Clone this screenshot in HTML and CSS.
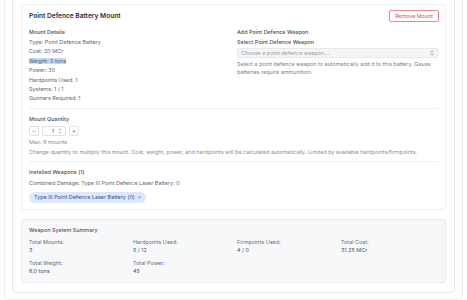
FILE: index.html
```html
<!DOCTYPE html>
<html>
<head>
    <title>Point Defence Battery Mount</title>
    <link rel="stylesheet" href="styles.css">
</head>
<body>

<div class="page">
    <div class="panel">

        <section class="card mount">
            <div class="mount-head">
                <h2>Point Defence Battery Mount</h2>
                <button class="btn-remove">Remove Mount</button>
            </div>

            <div class="mount-grid">
                <div class="details">
                    <h3>Mount Details</h3>
                    <ul class="stat-list">
                        <li>Type: Point Defence Battery</li>
                        <li>Cost: 20 MCr</li>
                        <li><span class="selected">Weight: 0 tons</span></li>
                        <li>Power: 30</li>
                        <li>Hardpoints Used: 1</li>
                        <li>Systems: 1 / 1</li>
                        <li>Gunners Required: 1</li>
                    </ul>
                </div>

                <div class="add-weapon">
                    <h3>Add Point Defence Weapon</h3>
                    <label class="field-label">Select Point Defence Weapon</label>
                    <div class="select">
                        <span>Choose a point defence weapon...</span>
                        <svg class="chevrons" width="4" height="6" viewBox="0 0 4 6">
                            <path d="M0.5 2.3 L2 0.8 L3.5 2.3 M0.5 3.7 L2 5.2 L3.5 3.7" fill="none" stroke="#777" stroke-width="0.7"/>
                        </svg>
                    </div>
                    <p class="help">Select a point defence weapon to automatically add it to this battery. Gauss batteries require ammunition.</p>
                </div>
            </div>

            <div class="section">
                <h3>Mount Quantity</h3>
                <div class="qty">
                    <button class="qty-btn">−</button>
                    <div class="qty-input">
                        <span>1</span>
                        <svg class="chevrons" width="4" height="6" viewBox="0 0 4 6">
                            <path d="M0.5 2.3 L2 0.8 L3.5 2.3 M0.5 3.7 L2 5.2 L3.5 3.7" fill="none" stroke="#888" stroke-width="0.7"/>
                        </svg>
                    </div>
                    <button class="qty-btn">+</button>
                </div>
                <p class="note">Max: 9 mounts</p>
                <p class="note">Change quantity to multiply this mount. Cost, weight, power, and hardpoints will be calculated automatically. Limited by available hardpoints/firmpoints.</p>
            </div>

            <div class="section last">
                <h3>Installed Weapons (1)</h3>
                <p class="combined">Combined Damage: Type III Point Defence Laser Battery: 0</p>
                <span class="chip">Type III Point Defence Laser Battery (0) <span class="chip-x">×</span></span>
            </div>
        </section>

        <section class="card summary">
            <h4>Weapon System Summary</h4>
            <div class="summary-grid">
                <div class="stat"><div class="stat-label">Total Mounts:</div><div>3</div></div>
                <div class="stat"><div class="stat-label">Hardpoints Used:</div><div>5 / 12</div></div>
                <div class="stat"><div class="stat-label">Firmpoints Used:</div><div>4 / 0</div></div>
                <div class="stat"><div class="stat-label">Total Cost:</div><div>31.25 MCr</div></div>
                <div class="stat"><div class="stat-label">Total Weight:</div><div>6.0 tons</div></div>
                <div class="stat"><div class="stat-label">Total Power:</div><div>45</div></div>
            </div>
        </section>

    </div>
</div>

</body>
</html>
```

FILE: styles.css
```css
body, html {
    margin: 0;
    padding: 0;
    background: #fff;
    font-family: Inter, "Liberation Sans", sans-serif;
    font-size: 5.45px;
    color: #63666b;
}

h2, h3, h4, p, ul {
    margin: 0;
    padding: 0;
}

.page {
    margin: -14px 4px 0 4px;
    padding: 7px 7px 6px 7px;
    border: 1px solid #ececec;
    border-radius: 5px;
}

.panel {
    padding: 9px 8px 9px 8px;
    border: 1px solid #e6e7ea;
    border-radius: 4px;
}

.card {
    border: 1px solid #eceef1;
    border-radius: 3px;
    background: #fff;
}

.mount {
    padding: 5px 7px 6px 7px;
}

.mount-head {
    display: flex;
    align-items: center;
    justify-content: space-between;
    height: 12px;
}

.mount-head h2 {
    font-size: 6.6px;
    font-weight: 600;
    color: #2d2f33;
}

.btn-remove {
    font-family: inherit;
    font-size: 5.3px;
    color: #d9534f;
    background: #fff;
    border: 1px solid #e88a87;
    border-radius: 2px;
    height: 12px;
    width: 50px;
    padding: 0;
    margin-right: -1px;
}

.mount-grid {
    display: grid;
    grid-template-columns: 1fr 1fr;
    column-gap: 7px;
    margin-top: 5px;
    padding-bottom: 4px;
}

h3 {
    font-size: 5.45px;
    font-weight: 500;
    color: #4a4d52;
    line-height: 10px;
}

.stat-list {
    list-style: none;
    margin-top: 1px;
}

.stat-list li {
    line-height: 9.4px;
}

.selected {
    background: #c4daf7;
    color: #4a5a70;
}

.field-label {
    display: block;
    font-weight: 500;
    color: #4a4d52;
    line-height: 9.4px;
    margin-top: 1px;
}

.select {
    display: flex;
    align-items: center;
    justify-content: space-between;
    height: 8px;
    margin-top: 1px;
    padding: 0 3px;
    background: #f4f5f7;
    border: 1px solid #e6e7ea;
    border-radius: 2px;
    color: #9a9da2;
}

.help {
    margin-top: 2px;
    line-height: 8px;
    color: #7d8086;
}

.section {
    border-top: 1px solid #eef0f2;
    padding: 6px 0 5px 0;
}

.section.last {
    padding-bottom: 0;
}

.section h3 {
    line-height: 9px;
}

.qty {
    display: flex;
    gap: 3px;
    margin-top: 2px;
}

.qty-btn {
    width: 10px;
    height: 10px;
    padding: 0;
    font-family: inherit;
    font-size: 5.3px;
    color: #555;
    background: #fff;
    border: 1px solid #dfe1e4;
    border-radius: 2px;
}

.qty-input {
    width: 24px;
    height: 10px;
    box-sizing: border-box;
    display: flex;
    align-items: center;
    justify-content: flex-end;
    gap: 4px;
    padding-right: 3px;
    border: 1px solid #dfe1e4;
    border-radius: 2px;
    color: #444;
}

.note {
    margin-top: 2px;
    line-height: 8px;
    color: #8a8d92;
}

.combined {
    margin-top: 2px;
    line-height: 9px;
}

.chip {
    display: inline-flex;
    align-items: center;
    gap: 3px;
    height: 11px;
    margin-top: 4px;
    padding: 0 5px;
    border-radius: 6px;
    background: #dce8fb;
    color: #33509a;
}

.chip-x {
    color: #5a6f9e;
}

.summary {
    margin-top: 9px;
    padding: 6px 7px 7px 7px;
    background: #f7f8fa;
    border-color: #e8eaed;
}

.summary h4 {
    font-size: 5.45px;
    font-weight: 500;
    color: #50535a;
    line-height: 9px;
}

.summary-grid {
    display: grid;
    grid-template-columns: repeat(4, 1fr);
    row-gap: 5px;
    column-gap: 7px;
    margin-top: 3px;
    line-height: 8px;
    color: #50535a;
}

.stat-label {
    color: #6b6e74;
}
```
